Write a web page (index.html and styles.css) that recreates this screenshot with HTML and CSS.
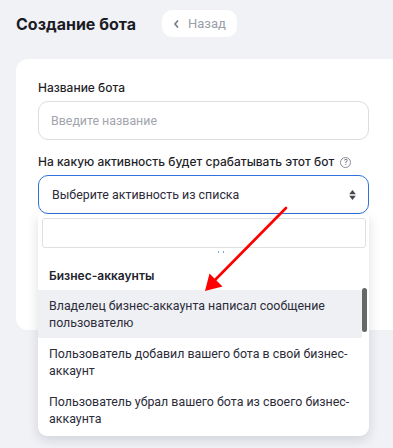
FILE: index.html
```html
<!DOCTYPE html>
<html lang="ru">
<head>
    <meta charset="UTF-8">
    <meta name="viewport" content="width=device-width, initial-scale=1.0">
    <title>Создание бота</title>
    <link rel="stylesheet" href="styles.css">
</head>
<body>
    <header class="top">
        <h1>Создание бота</h1>
        <a href="#" class="back-btn">
            <svg class="chev" viewBox="0 0 5 8"><path d="M4 0.5L1 4l3 3.5"/></svg>
            Назад
        </a>
    </header>

    <main class="card">
        <div class="field">
            <label class="label">Название бота</label>
            <input class="input" type="text" placeholder="Введите название">
        </div>

        <div class="field">
            <label class="label">На какую активность будет срабатывать этот бот
                <span class="help">?</span>
            </label>
            <div class="select-wrap">
                <div class="select">
                    <span>Выберите активность из списка</span>
                    <svg class="sort" viewBox="0 0 8 12">
                        <path d="M4 0L8 5H0z"/>
                        <path d="M4 12L0 7h8z"/>
                    </svg>
                </div>

                <div class="dropdown">
                    <div class="search"><input type="text"></div>
                    <div class="dots"><i></i><i></i></div>
                    <div class="group">Бизнес-аккаунты</div>
                    <ul class="options">
                        <li class="active">Владелец бизнес-аккаунта написал сообщение пользователю</li>
                        <li>Пользователь добавил вашего бота в свой бизнес-аккаунт</li>
                        <li>Пользователь убрал вашего бота из своего бизнес-аккаунта</li>
                    </ul>
                    <div class="scrollbar"></div>
                </div>
            </div>
        </div>
    </main>

    <!-- annotation arrow -->
    <svg class="arrow" viewBox="0 0 393 448">
        <line x1="286" y1="208" x2="214" y2="281" stroke="#f00" stroke-width="2.6" stroke-linecap="round"/>
        <path d="M205 291L209.5 273.5L222.5 286.5z" fill="#f00"/>
    </svg>
</body>
</html>
```

FILE: styles.css
```css
* {
    margin: 0;
    padding: 0;
    box-sizing: border-box;
}

body {
    font-family: Inter, "Noto Sans", sans-serif;
    background: #f1f2f6;
    color: #24242f;
    width: 393px;
    height: 448px;
    overflow: hidden;
    position: relative;
}

.top {
    display: flex;
    align-items: center;
    gap: 26px;
    padding: 10px 16px 0;
    height: 37px;
}

.top h1 {
    font-size: 16px;
    font-weight: 700;
    color: #1b1b26;
}

.back-btn {
    display: flex;
    align-items: center;
    gap: 9px;
    height: 27px;
    padding: 0 11px 0 12px;
    background: #fff;
    border-radius: 10px;
    color: #9a9ea8;
    font-family: Roboto, sans-serif;
    font-size: 13px;
    text-decoration: none;
}

.chev {
    width: 5px;
    height: 8px;
    fill: none;
    stroke: #80838c;
    stroke-width: 1.8;
}

.card {
    margin: 22px -20px 0 16px;
    padding: 22px 22px 0;
    height: 271px;
    background: #fff;
    border-radius: 12px;
}

.field {
    width: 331px;
    margin-bottom: 15px;
}

.label {
    display: flex;
    align-items: center;
    gap: 6px;
    font-size: 12px;
    line-height: 14px;
    font-weight: 500;
    color: #1f1f2a;
    margin-bottom: 6px;
}

.help {
    width: 11px;
    height: 11px;
    border: 1px solid #8a8d96;
    border-radius: 50%;
    font-size: 8px;
    color: #6a6d76;
    display: flex;
    align-items: center;
    justify-content: center;
    font-weight: 400;
}

.input {
    width: 100%;
    height: 39px;
    border: 1px solid #dcdde2;
    border-radius: 10px;
    padding: 0 12px;
    font-family: Roboto, sans-serif;
    font-size: 12.4px;
    outline: none;
}

.input::placeholder {
    color: #a2a5ad;
}

.select-wrap {
    position: relative;
}

.select {
    height: 39px;
    border: 1px solid #2f72dc;
    border-radius: 10px;
    padding: 0 12px 0 13px;
    display: flex;
    align-items: center;
    justify-content: space-between;
    font-family: Roboto, sans-serif;
    font-size: 12.4px;
    color: #2c2c3a;
}

.sort {
    width: 7px;
    height: 10px;
    fill: #45464d;
}

.dropdown {
    position: absolute;
    top: 39px;
    left: 0;
    width: 331px;
    background: #fff;
    border-radius: 0 0 9px 9px;
    box-shadow: 0 4px 12px rgba(20, 20, 40, 0.14);
    padding-bottom: 2px;
    font-family: Roboto, sans-serif;
}

.search {
    padding: 4px 3px 0 4px;
}

.search input {
    width: 100%;
    height: 30px;
    border: 1px solid #dfe0e3;
    border-radius: 3px;
    outline: none;
}

.dots {
    display: flex;
    gap: 4px;
    padding-left: 180px;
    height: 14px;
    padding-top: 3px;
}

.dots i {
    width: 1px;
    height: 2px;
    background: #7fa6d8;
}

.group {
    font-family: Inter, sans-serif;
    font-size: 12px;
    font-weight: 600;
    line-height: 14px;
    color: #23232e;
    padding: 7px 11px 7px;
}

.options {
    list-style: none;
    margin-right: 7px;
}

.options li {
    font-size: 12.4px;
    line-height: 17px;
    color: #2c2c3a;
    padding: 7px 11px;
    height: 48px;
}

.options li.active {
    background: #eff0f4;
}

.scrollbar {
    position: absolute;
    right: 2px;
    top: 74px;
    width: 5px;
    height: 44px;
    border-radius: 3px;
    background: #666;
}

.arrow {
    position: absolute;
    left: 0;
    top: 0;
    width: 393px;
    height: 448px;
    pointer-events: none;
}
```
